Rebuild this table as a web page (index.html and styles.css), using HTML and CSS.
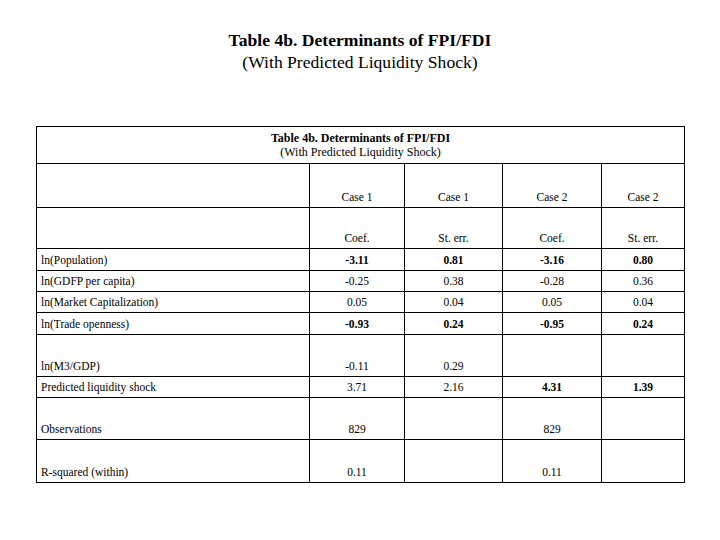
FILE: index.html
```html
<!DOCTYPE html>
<html>
<head>
<meta charset="utf-8">
<link rel="stylesheet" href="styles.css">
</head>
<body>
<div class="heading">
  <div class="heading-main">Table 4b. Determinants of FPI/FDI</div>
  <div class="heading-sub">(With Predicted Liquidity Shock)</div>
</div>
<table class="results">
  <colgroup>
    <col class="c-label">
    <col class="c-1">
    <col class="c-2">
    <col class="c-3">
    <col class="c-4">
  </colgroup>
  <tr class="r-title">
    <td colspan="5" class="title-cell">
      <div class="title-main">Table 4b. Determinants of FPI/FDI</div>
      <div class="title-sub">(With Predicted Liquidity Shock)</div>
    </td>
  </tr>
  <tr class="r-case">
    <td></td><td>Case 1</td><td>Case 1</td><td>Case 2</td><td>Case 2</td>
  </tr>
  <tr class="r-coef">
    <td></td><td>Coef.</td><td>St. err.</td><td>Coef.</td><td>St. err.</td>
  </tr>
  <tr class="r-a">
    <td>ln(Population)</td><td class="b">-3.11</td><td class="b">0.81</td><td class="b">-3.16</td><td class="b">0.80</td>
  </tr>
  <tr class="r-b">
    <td>ln(GDFP per capita)</td><td>-0.25</td><td>0.38</td><td>-0.28</td><td>0.36</td>
  </tr>
  <tr class="r-b">
    <td>ln(Market Capitalization)</td><td>0.05</td><td>0.04</td><td>0.05</td><td>0.04</td>
  </tr>
  <tr class="r-a">
    <td>ln(Trade openness)</td><td class="b">-0.93</td><td class="b">0.24</td><td class="b">-0.95</td><td class="b">0.24</td>
  </tr>
  <tr class="r-tall">
    <td>ln(M3/GDP)</td><td>-0.11</td><td>0.29</td><td></td><td></td>
  </tr>
  <tr class="r-b">
    <td>Predicted liquidity shock</td><td>3.71</td><td>2.16</td><td class="b">4.31</td><td class="b">1.39</td>
  </tr>
  <tr class="r-tall">
    <td>Observations</td><td>829</td><td></td><td>829</td><td></td>
  </tr>
  <tr class="r-last">
    <td>R-squared (within)</td><td>0.11</td><td></td><td>0.11</td><td></td>
  </tr>
</table>
</body>
</html>
```
FILE: styles.css
```css
html, body {
  margin: 0;
  padding: 0;
  background: #ffffff;
  color: #000000;
  font-family: "Liberation Serif", "Times New Roman", serif;
}

.heading {
  padding-top: 29px;
  text-align: center;
  font-size: 17.6px;
  line-height: 22px;
}

.heading-main {
  font-weight: bold;
}

.results {
  margin-top: 53px;
  margin-left: 36px;
  width: 649px;
  table-layout: fixed;
  border-collapse: collapse;
  font-size: 11.5px;
  line-height: 13px;
}

.c-label { width: 273px; }
.c-1 { width: 95px; }
.c-2 { width: 98px; }
.c-3 { width: 99px; }
.c-4 { width: 83px; }

.results td {
  border: 1px solid #000000;
  padding: 0 2px 3px 2px;
  vertical-align: bottom;
  text-align: center;
  white-space: nowrap;
}

.results td:first-child {
  text-align: left;
  padding-left: 4px;
}

.results td.title-cell {
  text-align: center;
  vertical-align: top;
  padding: 4px 4px 3px 4px;
  font-size: 12px;
  line-height: 14px;
}

.title-main {
  font-weight: bold;
}

.results td.b {
  font-weight: bold;
}

.r-title { height: 37px; }
.r-case { height: 44px; }
.r-coef { height: 41px; }
.r-a { height: 22px; }
.r-b { height: 21px; }
.r-tall { height: 42px; }
.r-last { height: 43px; }
```
